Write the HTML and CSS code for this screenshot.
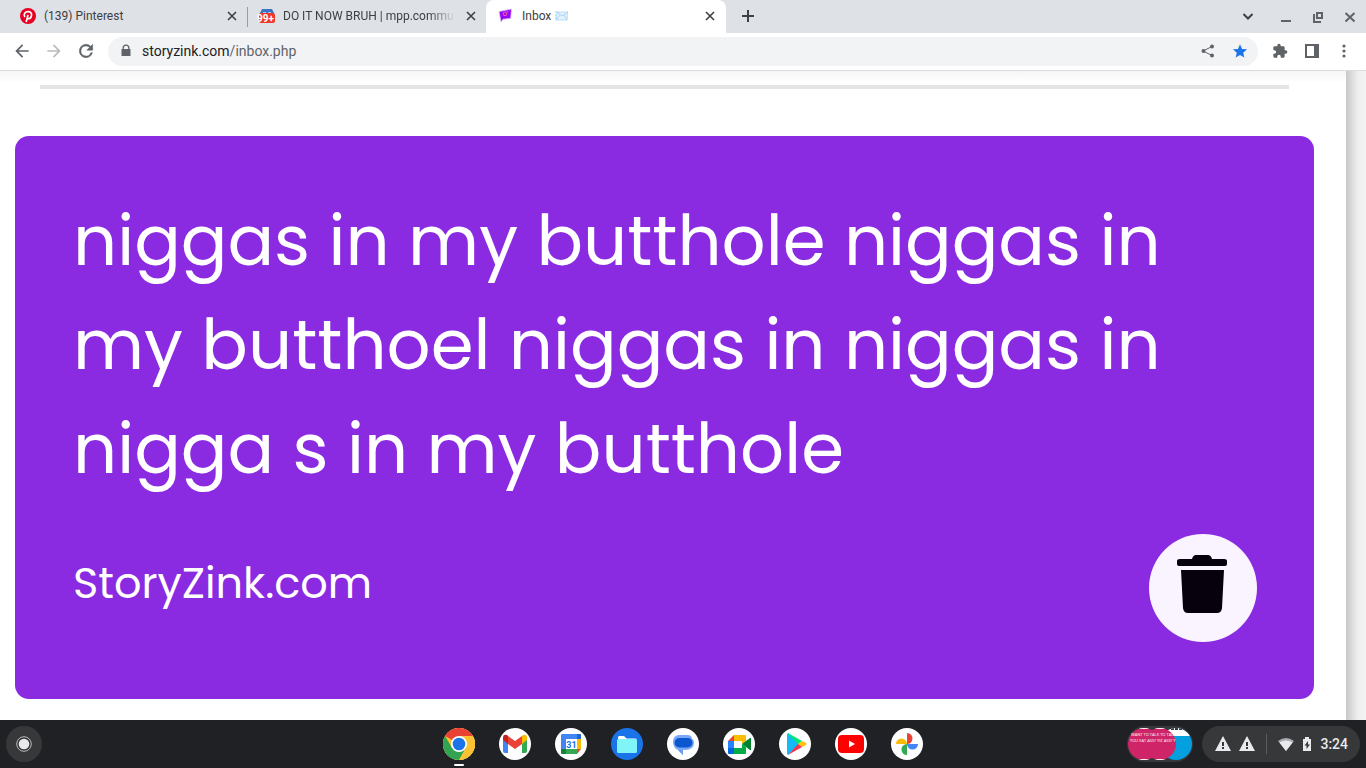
FILE: index.html
```html
<!DOCTYPE html>
<html lang="en">
<head>
<meta charset="utf-8">
<title>Inbox</title>
<link rel="stylesheet" href="styles.css">
</head>
<body>
<header class="tabstrip">
  <div class="tab">
    <svg class="favicon" viewBox="0 0 16 16"><circle cx="8" cy="8" r="8" fill="#e60023"/><path d="M6.200 14 8 7M4.900 9C3.200 6.300 5 3.600 8.200 3.600c2.500 0 3.700 1.800 3.300 3.800-.4 2.300-1.700 3.400-3 3.200-.8-.1-1.200-.7-1.300-1.100" fill="none" stroke="#fff" stroke-width="1.700"/></svg>
    <span class="tab-title">(139) Pinterest</span>
    <button class="tab-close" aria-label="Close Pinterest"><svg viewBox="0 0 16 16"><path d="m4 4 8 8m0-8-8 8"/></svg></button>
  </div>
  <div class="tab tab-divided">
    <span class="favicon badge-icon">
      <svg viewBox="0 0 16 16"><path d="M3 1h10l2 4v3H1V5z" fill="#3b74c6"/><path d="M4 4h3v2H4zm5 0h3v2H9z" fill="#a9c7ee"/><rect y="5" width="16" height="10" rx="2" fill="#f0392b"/></svg>
      <span class="badge-text">99+</span>
    </span>
    <span class="tab-title tab-fade">DO IT NOW BRUH | mpp.commu</span>
    <button class="tab-close" aria-label="Close mpp.community"><svg viewBox="0 0 16 16"><path d="m4 4 8 8m0-8-8 8"/></svg></button>
  </div>
  <div class="tab tab-active">
    <svg class="favicon" viewBox="0 0 16 16"><path d="m1 3.500 12.500-2.500-.8 9.500-7.700.8L3 14l-.6-3z" fill="#9405fa" stroke="#dcc6ee" stroke-width=".8"/><circle cx="7" cy="5.800" r="1.900" fill="#9b18c6" stroke="#f45bb8"/><path d="m8.300 5 2-2" stroke="#f45bb8"/></svg>
    <span class="tab-title">Inbox <svg class="envelope" viewBox="0 0 13 10"><path d="M0 1h2M0 4h2M0 7h2" stroke="#9fd2f2"/><path d="M2 1h11l-1 8H1z" fill="#e3f3fd" stroke="#a4d3f3" stroke-width=".7"/><path d="m2 1 5 4 6-4M1 9l4-5m7 5L9 4" fill="none" stroke="#9acdf1" stroke-width=".8"/></svg></span>
    <button class="tab-close" aria-label="Close Inbox"><svg viewBox="0 0 16 16"><path d="m4 4 8 8m0-8-8 8"/></svg></button>
  </div>
  <button class="new-tab" aria-label="New tab"><svg viewBox="0 0 16 16"><path d="M8 2v12M2 8h12"/></svg></button>
  <div class="window-controls">
    <button class="tab-search" aria-label="Search tabs"><svg viewBox="0 0 16 16"><path d="m3.500 6 4.500 4.500L12.500 6"/></svg></button>
    <button aria-label="Minimize"><svg viewBox="0 0 16 16"><path d="M3 13h10"/></svg></button>
    <button aria-label="Restore"><svg viewBox="0 0 16 16"><path d="M7 5h5v5H7zM4 6v8h7"/></svg></button>
    <button aria-label="Close window"><svg viewBox="0 0 16 16"><path d="m3.500 5 9 8.500m0-8.500-9 8.500"/></svg></button>
  </div>
</header>

<nav class="toolbar" aria-label="Browser toolbar">
  <div class="tools">
    <button class="large" aria-label="Back"><svg viewBox="0 0 24 24"><path d="M20 11H7.830l5.590-5.590L12 4l-8 8 8 8 1.410-1.410L7.830 13H20z"/></svg></button>
    <button class="large dim" aria-label="Forward" disabled><svg viewBox="0 0 24 24"><path d="m12 4-1.410 1.410L16.170 11H4v2h12.170l-5.580 5.590L12 20l8-8z"/></svg></button>
    <button class="large" aria-label="Reload"><svg viewBox="0 0 24 24"><path d="M17.650 6.350A7.960 7.960 0 0 0 12 4a8 8 0 1 0 7.730 10h-2.080A6 6 0 1 1 12 6c1.660 0 3.140.69 4.220 1.780L13 11h7V4z" stroke="currentColor" stroke-width=".6"/></svg></button>
  </div>
  <div class="omnibox">
    <svg class="lock" viewBox="0 0 12 14"><path d="M2.500 5V4a3.500 3.500 0 0 1 7 0v1h1v7h-9V5zm1.300 0h4.400V4a2.200 2.200 0 0 0-4.400 0z"/></svg>
    <span class="address"><span class="domain">storyzink.com</span>/inbox.php</span>
    <button aria-label="Share"><svg viewBox="0 0 16 16"><path d="m3 8 9-4.500M3 8l9 4.500" stroke="#5f6368"/><circle cx="3.500" cy="8" r="2"/><circle cx="12" cy="3.500" r="2"/><circle cx="12" cy="12.500" r="2"/></svg></button>
    <button class="starred" aria-label="Edit bookmark"><svg viewBox="0 0 24 24"><path d="m12 17.900 6.500 4-1.700-7.400 5.700-5-7.500-.6L12 2 9 8.900l-7.500.6 5.700 5-1.700 7.400z"/></svg></button>
  </div>
  <div class="tools">
    <button aria-label="Extensions"><svg viewBox="0 0 24 24"><path d="M20.500 11H19V7a2 2 0 0 0-2-2h-4V3.500a2.500 2.500 0 0 0-5 0V5H4a2 2 0 0 0-2 2v3.800h1.500a2.700 2.700 0 0 1 0 5.400H2V20a2 2 0 0 0 2 2h3.800v-1.500a2.700 2.700 0 0 1 5.400 0V22H17a2 2 0 0 0 2-2v-4h1.500a2.500 2.500 0 0 0 0-5z"/></svg></button>
    <button aria-label="Side panel"><svg viewBox="0 0 16 16"><path fill-rule="evenodd" d="M1 1h14v14H1zm2 2v10h7V3z"/></svg></button>
    <button aria-label="Menu"><svg viewBox="0 0 16 16"><circle cx="8" cy="3" r="1.600"/><circle cx="8" cy="8" r="1.600"/><circle cx="8" cy="13" r="1.600"/></svg></button>
  </div>
</nav>

<main class="viewport">
  <div class="sheet">
    <hr class="rule">
    <article class="card">
      <p class="message">niggas in my butthole niggas in my butthoel niggas in niggas in nigga s in my butthole</p>
      <footer class="card-footer">
        <span class="brand">StoryZink.com</span>
        <button class="delete" aria-label="Delete message"><svg viewBox="0 0 52 60"><path d="M4 5h12c1-3 2-4 4-4h12c2 0 3 1 4 4h12q3 0 3 2v3q0 2-3 2H4q-3 0-3-2V7q0-2 3-2zM5 16h43l-2 38q-.5 5-5 5H12q-4.500 0-5-5z"/></svg></button>
      </footer>
    </article>
  </div>
</main>

<footer class="shelf">
  <div class="shelf-side"><button class="launcher" aria-label="Launcher"><svg viewBox="0 0 16 16"><circle cx="8" cy="8" r="7.300" fill="none" stroke="#b9babd"/><circle cx="8" cy="8" r="5.300" fill="#e8eaed"/></svg></button></div>
  <div class="apps">
    <button class="app app-running" aria-label="Chrome"><svg viewBox="0 0 32 32"><circle cx="16" cy="16" r="16" fill="#fbc334"/><path d="M16 16 2.140 8A16 16 0 0 1 29.860 8H16z" fill="#e94235"/><path d="M2.140 8A16 16 0 0 0 16 32l6.900-12L16 16l-6.900 4z" fill="#32a350"/><path d="M16 8h13.860A16 16 0 0 1 16 32l6.930-12z" fill="#fbc334"/><circle cx="16" cy="16" r="8" fill="#fff"/><circle cx="16" cy="16" r="6.300" fill="#1a73e8"/></svg></button>
    <button class="app" aria-label="Gmail"><svg viewBox="0 0 32 32"><path d="M4 10v13q0 2 2 2h3V13z" fill="#4285f4"/><path d="M23 13v12h3q2 0 2-2V10z" fill="#34a853"/><path d="M9 8v8l7 5 7-5V8l-7 5z" fill="#ea4335"/><path d="M4 10q0-4 4-3l1 1v8l-5-4z" fill="#c5221f"/><path d="M28 10q0-4-4-3l-1 1v8l5-4z" fill="#fbbc04"/></svg></button>
    <button class="app" aria-label="Calendar"><svg viewBox="0 0 32 32"><path d="M7 6h15v5H11v10H6V7z" fill="#4285f4"/><path d="M22 6h3q1 0 1 1v4h-4z" fill="#1967d2"/><path d="M22 11h4v10h-4z" fill="#fbbc04"/><path d="M6 21h5v5H7q-1 0-1-1z" fill="#188038"/><path d="M11 21h11v5H11z" fill="#34a853"/><path d="M22 21h4l-4 5z" fill="#ea4335"/><text class="date" x="16.500" y="19.500" text-anchor="middle">31</text></svg></button>
    <button class="app app-files" aria-label="Files"><svg viewBox="0 0 32 32"><path d="M13 10h11q2 0 2 2v3H13z" fill="#8ab4f8"/><path d="M8 8h5l3 3h-9V9z" fill="#fff"/><rect x="6" y="11" width="20" height="14" rx="1.500" fill="#80f5f8"/></svg></button>
    <button class="app" aria-label="Messages"><svg viewBox="0 0 32 32"><path d="M12 7h9q3.500 0 4 3.500 2 1 2 4.500 0 7-9 7h-2v5l-5-5Q6 20 6 13a6 6 0 0 1 6-6z" fill="#7aa8f8"/><rect x="7.500" y="10" width="18" height="9.500" rx="4.700" fill="#0b57d0"/><path d="m11 22 5 5v-5z" fill="#669df6"/></svg></button>
    <button class="app" aria-label="Meet"><svg viewBox="0 0 32 32"><path d="M11 7v6H5z" fill="#ea4335"/><path d="M5 13h6v7H5z" fill="#2684fc"/><path d="M5 20h6v6H6q-1 0-1-1z" fill="#0066da"/><path d="M11 7h11q1 0 1 1v5l-4 3v-3h-8z" fill="#fbbc04"/><path d="M11 20h8v-4l4 3v6q0 1-1 1H11z" fill="#00ac47"/><path d="m19 16 8-6q1-.5 1 .5v11q0 1-1 .5z" fill="#00832d"/></svg></button>
    <button class="app" aria-label="Play Store"><svg viewBox="0 0 32 32"><path d="M9 5v22l11-11z" fill="#00c3ff"/><path d="M9 5q-1 1-1 2v18q0 1 1 2l8-11z" fill="#14b9f5"/><path d="m9 5 14 8-4 3L9 6z" fill="#00e676"/><path d="m23 13 4 2q1 1 0 2l-4 2-4-3z" fill="#ffc107"/><path d="m9 27 14-8-4-3z" fill="#f43249"/></svg></button>
    <button class="app" aria-label="YouTube"><svg viewBox="0 0 32 32"><rect x="3" y="7" width="26" height="18" rx="4" fill="#f00"/><path d="m14 12.500 6 3.500-6 3.500z" fill="#fff"/></svg></button>
    <button class="app" aria-label="Photos"><svg viewBox="0 0 32 32"><path d="M16 5a5.500 5.500 0 0 1 0 11z" fill="#ea4335"/><path d="M27 16a5.500 5.500 0 0 1-11 0z" fill="#4285f4"/><path d="M16 27a5.500 5.500 0 0 1 0-11z" fill="#34a853"/><path d="M5 16a5.500 5.500 0 0 1 11 0z" fill="#fbbc04"/></svg></button>
  </div>
  <div class="shelf-side shelf-end">
    <button class="holding" aria-label="Recent screenshots">
      <svg viewBox="0 0 66 36"><defs><clipPath id="c1"><circle cx="17" cy="18" r="16"/></clipPath><clipPath id="c2"><circle cx="33" cy="18" r="16"/></clipPath><clipPath id="c3"><circle cx="49" cy="18" r="16"/></clipPath></defs>
      <g clip-path="url(#c3)"><path d="M33 2h32v32H33z" fill="#049fdf"/><path d="M33 2h32v8H33z" fill="#fff"/><path d="M44 3h15" stroke="#333" stroke-width="2" stroke-dasharray="3 1"/></g>
      <g clip-path="url(#c2)"><path d="M17 2h32v32H17z" fill="#cf2467"/><path d="M17 2.500h32m-32 31h32" stroke="#fff"/></g>
      <g clip-path="url(#c1)"><path d="M1 2h32v32H1z" fill="#cf2467"/><path d="M1 2.500h32m-32 31h32" stroke="#fff"/></g>
      <text class="thumb-text" x="4" y="10">WANT TO TALK TO TALK</text><text class="thumb-text" x="3" y="16">YOU EAT ASS? YIZ ASS? Y</text></svg>
    </button>
    <button class="status">
      <svg viewBox="0 0 16 16"><path fill-rule="evenodd" d="m8 0 8 15H0zM7 6v4h2V6zm0 5v2h2v-2z"/></svg>
      <svg viewBox="0 0 16 16"><path fill-rule="evenodd" d="m8 0 8 15H0zM7 6v4h2V6zm0 5v2h2v-2z"/></svg>
      <span class="status-divider"></span>
      <svg viewBox="0 0 16 16"><path d="M0 5q8-6 16 0L8 15z" fill="#a9aaad"/><path d="M1.500 6.500q6.500-4 13 0L8 15z"/></svg>
      <svg class="battery" viewBox="0 0 10 16"><path fill-rule="evenodd" d="M3 1h4v2h2v12H1V3h2zm3 4L2.500 9.500h2V13L8 8.500H6z"/></svg>
      <span class="clock">3:24</span>
    </button>
  </div>
</footer>
</body>
</html>
```
FILE: styles.css
```css
* { box-sizing: border-box; }

body {
  margin: 0;
  height: 100vh;
  display: flex;
  flex-direction: column;
  overflow: hidden;
  background: #fff;
  font-family: Roboto, "Liberation Sans", sans-serif;
}

button {
  display: flex;
  align-items: center;
  justify-content: center;
  flex: none;
  padding: 0;
  border: 0;
  background: none;
  color: inherit;
  font: inherit;
}

svg { display: block; flex: none; }

/* Tab strip */
.tabstrip {
  display: flex;
  flex: none;
  height: 33px;
  padding-left: 8px;
  background: #dee1e6;
  color: #3c4043;
}

.tab {
  display: flex;
  align-items: center;
  gap: 8px;
  width: 239px;
  padding: 0 7px 2px 12px;
  font-size: 12px;
}

.tab-divided { background: linear-gradient(#9a9da1, #9a9da1) 0 50% / 1px 20px no-repeat; }

.tab-active {
  width: 240px;
  padding-right: 8px;
  border-radius: 8px 8px 0 0;
  background: #fff;
}

.favicon { width: 16px; height: 16px; flex: none; }
.badge-icon { position: relative; }

.badge-text {
  position: absolute;
  left: -2px;
  top: 6px;
  color: #fff;
  font-size: 10px;
  font-weight: 700;
  line-height: 10px;
}

.tab-title {
  display: flex;
  align-items: center;
  gap: 4px;
  flex: 1;
  min-width: 0;
  white-space: nowrap;
}

.tab-fade { -webkit-mask-image: linear-gradient(to right, #000 85%, transparent); mask-image: linear-gradient(to right, #000 85%, transparent); }
.envelope { width: 13px; height: 10px; }
.tab-close { width: 16px; height: 16px; }
.tab-close svg, .new-tab svg, .window-controls svg { width: 16px; height: 16px; fill: none; stroke: currentColor; stroke-width: 2; }
.tab-close svg { stroke-width: 1.6; }
.new-tab { width: 28px; margin-left: 8px; padding-bottom: 2px; }
.window-controls { display: flex; margin-left: auto; color: #5f6368; }
.window-controls button { width: 32px; padding-bottom: 2px; }
.window-controls .tab-search { width: 44px; color: #3c4043; }

/* Toolbar */
.toolbar {
  display: flex;
  flex: none;
  align-items: center;
  gap: 6px;
  height: 38px;
  padding: 0 6px;
  border-bottom: 1px solid #dadce0;
}

.tools { display: flex; color: #5f6368; }
.tools button { width: 32px; height: 32px; padding-bottom: 2px; }
.tools svg { width: 16px; height: 16px; fill: currentColor; }
.tools .large svg { width: 20px; height: 20px; }
.dim { color: #babcbe; }

.omnibox {
  display: flex;
  flex: 1;
  align-items: center;
  height: 29px;
  padding: 0 2px 2px 12px;
  border-radius: 15px;
  background: #f1f3f4;
  color: #5f6368;
}

.omnibox svg { width: 16px; height: 16px; fill: currentColor; }
.omnibox .lock { width: 12px; height: 14px; }
.omnibox button { width: 32px; height: 27px; }
.omnibox .starred { color: #1a73e8; }
.address { flex: 1; padding-left: 10px; font-size: 14px; }
.domain { color: #202124; }

/* Page */
.viewport {
  flex: 1;
  min-height: 0;
  padding-right: 20px;
  overflow: hidden;
  background: linear-gradient(to left, #f3f3f3, #efefef 8px, #c8c8c8 20px, #c8c8c8);
}

.sheet {
  height: 100%;
  padding: 14px 32px 20px 15px;
  background: linear-gradient(#f5f5f5, #fff 12px);
}

.rule { height: 4px; margin: 0 25px; border: 0; background: #e5e5e5; }

.card {
  margin-top: 47px;
  padding: 53px 57px 57px 58px;
  border-radius: 14px;
  background: #8a2be2;
  color: #fff;
  font-family: Poppins, Inter, sans-serif;
}

.message { margin: 0; font-size: 69px; line-height: 104px; }

.card-footer {
  display: flex;
  align-items: center;
  justify-content: space-between;
  margin-top: 33px;
}

.brand { padding-bottom: 10px; font-size: 43px; line-height: 64px; }
.delete { width: 108px; height: 108px; padding: 0 2px 8px 0; border-radius: 50%; background: #f9f4ff; }
.delete svg { width: 52px; height: 60px; fill: #07000d; }

/* Shelf */
.shelf {
  display: flex;
  flex: none;
  align-items: center;
  height: 48px;
  padding: 0 6px;
  background: #202124;
  color: #e8eaed;
}

.shelf-side { display: flex; flex: 1; }
.shelf-end { justify-content: flex-end; gap: 9px; }
.launcher { width: 36px; height: 36px; border-radius: 50%; background: #37383a; }
.launcher svg { width: 16px; height: 16px; }
.apps { display: flex; gap: 24px; }
.app { position: relative; width: 32px; height: 32px; border-radius: 50%; background: #fff; }
.app svg { width: 32px; height: 32px; }
.app-files { background: #1a73e8; }

.app-running::after {
  content: "";
  position: absolute;
  left: 11px;
  bottom: -6px;
  width: 10px;
  height: 2px;
  border-radius: 1px;
  background: #fff;
}

.date { fill: #1a73e8; font: 700 9px Roboto, sans-serif; }
.holding { width: 66px; height: 36px; border-radius: 18px; background: #37383a; overflow: hidden; }
.holding svg { width: 66px; height: 36px; }
.thumb-text { fill: #fff; font: 4px "Open Sans", sans-serif; }

.status {
  gap: 8px;
  height: 36px;
  padding: 0 12px 0 13px;
  border-radius: 18px;
  background: #37383a;
}

.status svg { width: 16px; height: 16px; fill: currentColor; }
.status .battery { width: 10px; }
.status-divider { width: 1px; height: 20px; margin: 0 3px; background: #5b5d60; }
.clock { font-size: 14px; font-weight: 500; }
```
